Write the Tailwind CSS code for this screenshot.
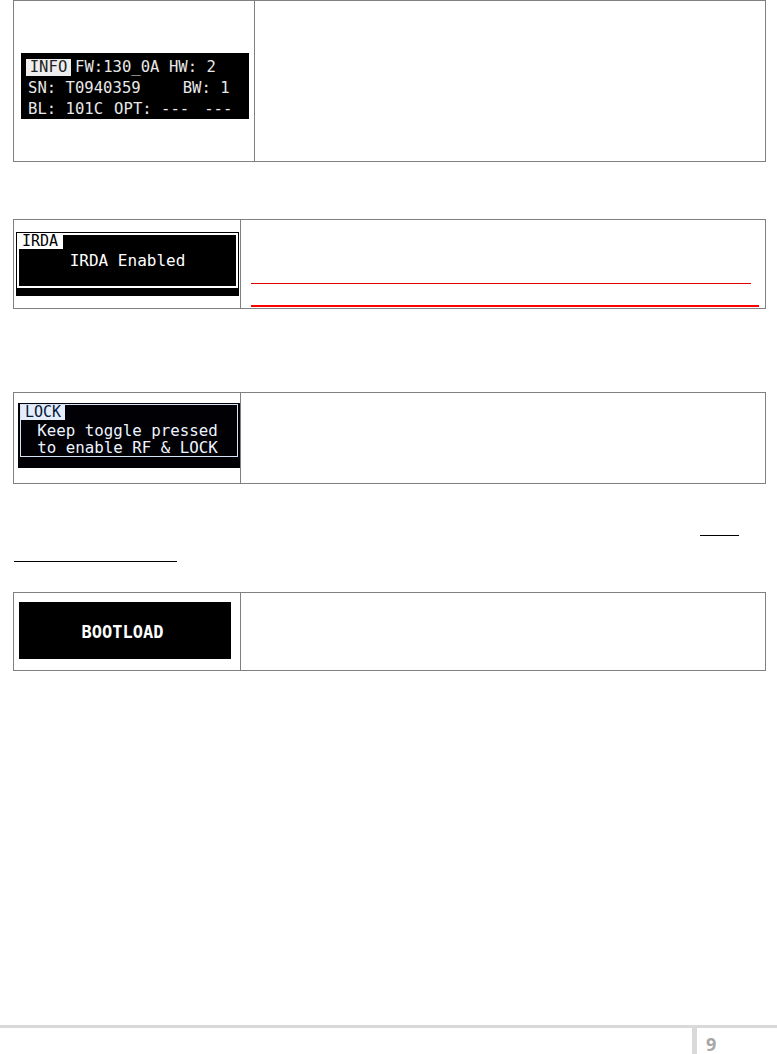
<!DOCTYPE html>
<html lang="en">
<head>
    <meta charset="UTF-8">
    <meta name="viewport" content="width=device-width, initial-scale=1.0">
    <title>Manual page 9</title>
    <script src="https://cdn.jsdelivr.net/npm/@tailwindcss/browser@4"></script>
</head>
<body class="bg-white w-[777px] h-[1054px] overflow-hidden font-['DejaVu_Sans_Mono',monospace]">

    <!-- INFO screen -->
    <div class="ml-[13px] w-[753px] h-[162px] border border-[#808080] flex">
        <div class="w-[241px] border-r border-[#808080] pl-[7px] pt-[52px]">
            <div class="w-[228px] h-[66px] bg-black text-[#e8e8e8] text-[15.6px] leading-[20px] pt-[4px]">
                <div class="flex items-center h-[20px] pl-[5px]">
                    <span class="bg-[#eeeeee] text-[#222222] h-[17px] leading-[17px] w-[45px] text-center">INFO</span>
                    <span class="ml-[4px] whitespace-pre">FW:130_0A HW: 2</span>
                </div>
                <div class="flex pl-[7px] mt-[1px]">
                    <span>SN: T0940359</span>
                    <span class="ml-[42px]">BW: 1</span>
                </div>
                <div class="flex pl-[7px] mt-[1px]">
                    <span>BL: 101C</span>
                    <span class="ml-[11px]">OPT: ---</span>
                    <span class="ml-[15px]">---</span>
                </div>
            </div>
        </div>
        <div class="flex-1"></div>
    </div>

    <!-- IRDA screen -->
    <div class="ml-[13px] mt-[57px] w-[753px] h-[90px] border border-[#808080] flex">
        <div class="w-[227px] border-r border-[#808080] pl-[2px] pt-[12px]">
            <div class="w-[223px] h-[64px] bg-black pl-[1px] pt-[1px]">
                <div class="w-[221px] h-[55px] border-2 border-white text-white text-center">
                    <div class="-ml-[2px] -mt-[2px] w-[46px] h-[16px] bg-white text-black text-[15px] leading-[16px]">IRDA</div>
                    <div class="pt-[2px] text-[16px] leading-[20px] whitespace-pre">IRDA Enabled</div>
                </div>
            </div>
        </div>
        <div class="flex-1 pl-[10px] pt-[63px]">
            <div class="w-[500px] h-px bg-[#e60000]"></div>
            <div class="w-[508px] h-[2px] mt-[21px] bg-[#ff0000]"></div>
        </div>
    </div>

    <!-- LOCK screen -->
    <div class="ml-[13px] mt-[83px] w-[753px] h-[92px] border border-[#808080] flex">
        <div class="w-[227px] border-r border-[#808080] pl-[4px] pt-[10px]">
            <div class="w-[222px] h-[65px] bg-[#000005] pl-[2px] pt-[1px]">
                <div class="w-[218px] h-[53px] border border-[#d5e3f7] text-[#eef4ff] text-center text-[15.8px] leading-[17px] pr-[3px]">
                    <div class="w-[44px] h-[15px] bg-[#e4edf9] text-[#06183a] text-[15px] leading-[15px]">LOCK</div>
                    <div class="pt-[2px] whitespace-pre">Keep toggle pressed</div>
                    <div class="whitespace-pre">to enable RF &amp; LOCK</div>
                </div>
            </div>
        </div>
        <div class="flex-1"></div>
    </div>

    <div class="ml-[700px] mt-[51px] w-[39px] h-px bg-black"></div>
    <div class="ml-[14px] mt-[25px] w-[163px] h-px bg-black"></div>

    <!-- BOOTLOAD screen -->
    <div class="ml-[13px] mt-[30px] w-[753px] h-[79px] border border-[#808080] flex">
        <div class="w-[227px] border-r border-[#808080] pl-[5px] pt-[9px]">
            <div class="w-[212px] h-[57px] bg-black text-white text-[17px] font-bold flex items-center justify-center pt-[4px] pr-[5px]">BOOTLOAD</div>
        </div>
        <div class="flex-1"></div>
    </div>

    <!-- Footer -->
    <div class="mt-[354px] h-[3px] bg-[#d9d9d9]"></div>
    <div class="h-[26px] flex pl-[692px]">
        <div class="w-[5px] bg-[#d9d9d9]"></div>
        <div class="ml-[9px] pt-[6px] text-[18px] leading-[20px] font-bold text-[#a6a6a6] font-['Open_Sans',sans-serif]">9</div>
    </div>

</body>
</html>
